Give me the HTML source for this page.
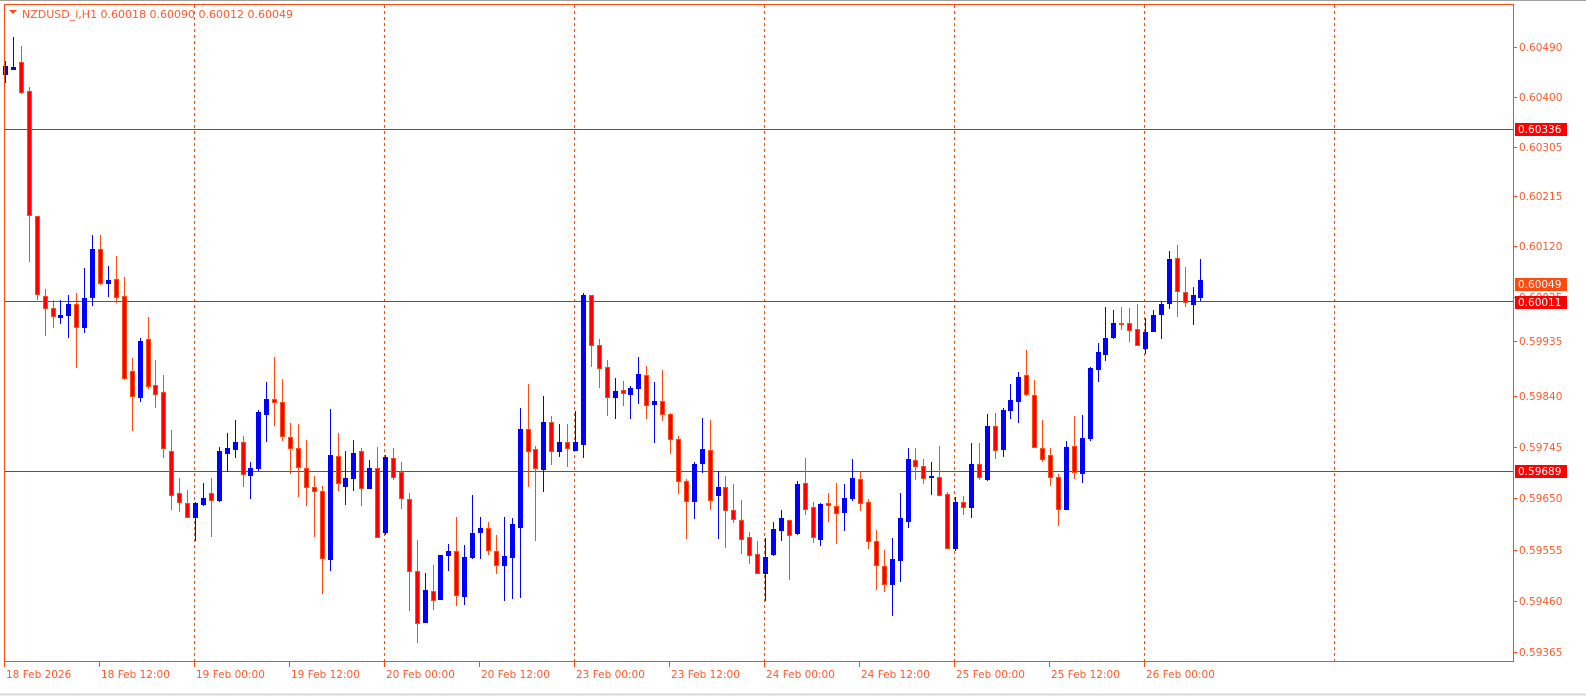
<!DOCTYPE html>
<html><head><meta charset="utf-8"><style>
html,body{margin:0;padding:0;background:#fff;width:1586px;height:696px;overflow:hidden}
svg{display:block}
text{font-family:"DejaVu Sans","Liberation Sans",sans-serif;font-size:10.5px}
</style></head><body>
<svg id="s" width="1586" height="696" xmlns="http://www.w3.org/2000/svg">
<rect x="0" y="0" width="1586" height="696" fill="#fff"/>
<line x1="0" y1="0.5" x2="1586" y2="0.5" stroke="#a0a0a0"/>
<line x1="0" y1="694.5" x2="1586" y2="694.5" stroke="#d8d8d8" stroke-width="2"/>
<g id="grid" stroke="#ff4a10" stroke-width="1" stroke-dasharray="3,3"></g>
<g stroke="#ff1010" stroke-width="1">
<line x1="4" y1="129.5" x2="1513" y2="129.5"/>
<line x1="4" y1="301.5" x2="1513" y2="301.5"/>
<line x1="4" y1="471.5" x2="1513" y2="471.5"/>
</g>
<g id="c"></g>
<rect x="4.5" y="4.5" width="1509" height="657" fill="none" stroke="#ff4a10" stroke-width="1"/>
<text x="22" y="18" fill="#ff5a2a" style="font-size:11px">NZDUSD_i,H1  0.60018 0.60090 0.60012 0.60049</text>
<polygon points="9,10 17,10 13,14" fill="#ff4a10"/>
<g id="ax" fill="#ff5a2a"></g>
</svg>
<script>
var NS="http://www.w3.org/2000/svg";
function el(t,a,p,txt){var e=document.createElementNS(NS,t);for(var k in a)e.setAttribute(k,a[k]);if(txt)e.textContent=txt;p.appendChild(e);return e;}
var grid=document.getElementById('grid');
[194,384,574,764,954,1144,1334].forEach(function(x){el('line',{x1:x+.5,y1:5,x2:x+.5,y2:661},grid);});
var z1=[["b",160,180,148,200],["b",164,168,90,168],["r",152,222,112,225],["r",220,518,212,630],["r",521,708,521,720],["r",714,742,696,807],["r",742,761,722,788],["b",759,763,722,778],["b",733,759,710,812],["r",733,788,706,885],["b",718,788,646,800],["b",600,716,566,735],["r",600,683,566,685],["b",676,683,641,714],["r",673,716,618,728],["r",714,910,668,912],["r",894,953,862,1035],["b",822,956,815,966],["r",818,930,765,935],["r",928,948,867,980],["r",944,1080,903,1100],["r",1086,1192,1036,1225],["r",1188,1208,1150,1230],["r",1210,1244,1180,1244],["b",1210,1244,1208,1300],["b",1200,1213,1163,1216],["r",1188,1204,1152,1290],["b",1086,1204,1076,1206],["b",1080,1090,1043,1133],["b",1064,1082,1012,1100],["r",1064,1141,1050,1170],["b",1128,1144,1112,1200],["b",993,1128,988,1132],["b",961,998,920,1062],["r",961,968,860,1024],["r",968,1050,914,1060],["r",1052,1080,1018,1138],["r",1080,1124,1022,1195],["r",1126,1172,1060,1216],["r",1172,1182,1145,1290],["r",1182,1343,1170,1428],["b",1095,1346,986,1373],["r",1098,1164,1043,1180],["b",1150,1170,1086,1214],["b",1090,1150,1060,1180],["r",1086,1174,1080,1216],["b",1128,1174,1107,1174],["r",1128,1294,1076,1294],["b",1100,1282,1096,1285],["r",1102,1148,1080,1153]];
var z2=[["r",685,763,655,795],["r",767,985,748,1105],["r",985,1144,890,1200],["b",1042,1141,993,1141],["r",1045,1072,966,1100],["b",937,1070,937,1070],["b",925,938,903,983],["r",925,1057,822,1090],["b",942,1060,906,1087],["b",870,944,756,947],["b",856,866,822,947],["r",856,922,837,935],["r",925,967,876,992],["b",940,967,822,1073],["b",843,943,825,1066],["b",555,851,492,1064],["r",555,622,417,728],["r",616,673,606,890],["b",532,677,453,743],["r",532,622,514,661],["b",595,622,540,637],["r",595,613,540,667],["b",595,617,501,619],["b",147,599,143,638],["r",147,301,147,362],["r",301,370,282,428],["r",367,457,345,512],["b",438,458,399,521],["r",437,445,408,482],["b",430,449,423,521],["b",387,431,336,476],["r",391,481,363,521],["b",468,479,413,593],["r",468,508,375,527],["r",508,586,505,626],["r",586,712,577,749],["r",712,772,706,886],["b",660,772,656,824],["b",615,659,522,686],["r",619,769,528,797],["b",730,755,682,886],["r",730,800,697,914],["r",799,827,722,836],["r",832,889,769,932],["r",883,938,866,962],["r",934,991,894,991],["b",942,991,886,1072]];
var z3=[["b",918,993,897,997],["b",886,920,860,950],["r",892,935,892,1070],["b",780,930,771,932],["r",777,857,702,872],["r",852,943,837,956],["b",843,947,840,966],["r",840,845,810,893],["r",847,868,777,960],["b",825,866,780,920],["b",762,825,705,830],["r",765,838,743,860],["r",835,955,828,977],["r",955,1027,920,1100],["r",1030,1085,983,1106],["b",1008,1085,946,1180],["b",885,1013,810,1076],["b",705,893,672,911],["r",708,726,672,765],["r",727,763,705,778],["b",756,761,714,812],["r",760,815,666,815],["r",813,976,807,976],["b",837,976,822,982],["r",837,851,818,872],["b",720,851,657,881],["r",720,760,657,765],["b",606,765,570,768],["r",604,677,565,704],["b",557,674,552,695],["b",525,557,477,582],["b",456,530,441,593],["r",451,509,375,512],["r",511,670,465,670],["r",672,707,587,712],["r",692,761,672,783],["r",760,857,750,905],["b",669,857,651,857],["r",667,746,576,764],["b",642,749,573,776],["b",429,641,426,647],["b",381,431,353,470],["b",337,386,245,404],["b",292,336,252,338],["r",292,297,243,311],["r",292,313,246,347],["r",310,361,234,361],["b",319,368,278,383],["b",268,317,252,317],["b",235,266,225,338],["b",100,233,75,248],["r",97,197,57,272],["r",199,230,123,242],["b",208,236,183,296],["b",162,215,98,224]];
var C=[];
z1.forEach(function(d){C.push([d[0]].concat(d.slice(1).map(function(v){return 129+(v-312)/2.404;})));});
z2.forEach(function(d){C.push([d[0]].concat(d.slice(1).map(function(v){return 301+(v-166)/3.035;})));});
z3.forEach(function(d){C.push([d[0]].concat(d.slice(1).map(function(v){return 301+(v-226)/3.035;})));});
var g=document.getElementById('c');
C.forEach(function(d,i){
 var x=Math.round(5+i*7.917);
 var blue=d[0]=="b";
 var wc=blue?"#0000ff":"#ff4a10";
 var bt=Math.round(d[1]),bb=Math.round(d[2]),wt=Math.round(d[3]),wb=Math.round(d[4]);
 el('line',{x1:x+.5,y1:wt,x2:x+.5,y2:wb+1,stroke:wc,'stroke-width':1},g);
 var h=Math.max(1,bb-bt);
 if(blue){el('rect',{x:x-2,y:bt,width:5,height:h+1,fill:"#0000ff"},g);}
 else{el('rect',{x:x-1.5,y:bt+.5,width:4,height:Math.max(h,1),fill:"#ff0000",stroke:"#ff4a10",'stroke-width':1},g);}
});
var ax=document.getElementById('ax');
[["0.60490",47],["0.60400",97],["0.60305",147],["0.60215",196],["0.60120",246],["0.60025",297],["0.59935",341],["0.59840",396],["0.59745",447],["0.59650",498],["0.59555",550],["0.59460",601],["0.59365",652]].forEach(function(p){
 el('line',{x1:1513,y1:p[1]+.5,x2:1517,y2:p[1]+.5,stroke:"#ff4a10"},ax);
 el('text',{x:1519,y:p[1]+4},ax,p[0]);
});
[["0.60336",129,"#ff0000"],["0.60049",284,"#ff4a10"],["0.60011",302,"#ff0000"],["0.59689",471,"#ff0000"]].forEach(function(p){
 el('rect',{x:1515,y:p[1]-6,width:52,height:13,fill:p[2]},ax);
 el('text',{x:1518,y:p[1]+4,fill:"#fff"},ax,p[0]);
});
var labs=["18 Feb 2026","18 Feb 12:00","19 Feb 00:00","19 Feb 12:00","20 Feb 00:00","20 Feb 12:00","23 Feb 00:00","23 Feb 12:00","24 Feb 00:00","24 Feb 12:00","25 Feb 00:00","25 Feb 12:00","26 Feb 00:00"];
labs.forEach(function(t,i){
 var x=4+i*95;
 el('line',{x1:x+.5,y1:662,x2:x+.5,y2:667,stroke:"#ff4a10"},ax);
 el('text',{x:x+2,y:678},ax,t);
});
</script>
</body></html>
